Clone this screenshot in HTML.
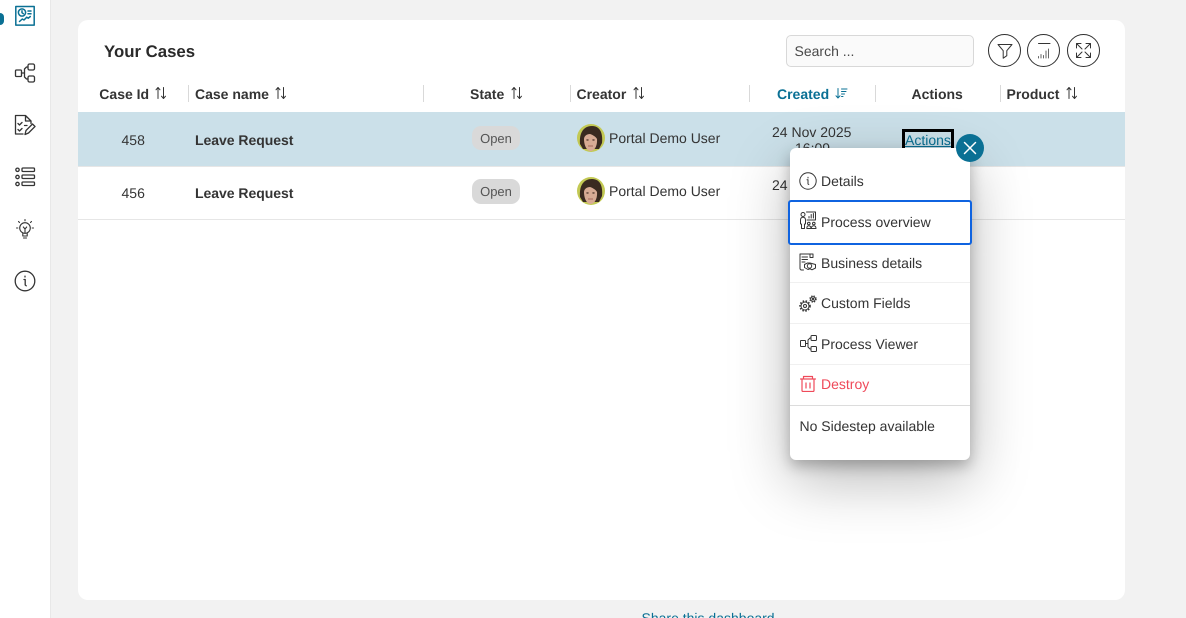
<!DOCTYPE html>
<html><head><meta charset="utf-8"><style>
*{box-sizing:border-box}
html,body{margin:0;padding:0;width:1186px;height:618px;overflow:hidden;background:#f2f2f2}
#root{position:relative;width:1186px;height:618px;overflow:hidden;background:#f2f2f2;font-family:"Liberation Sans",sans-serif;color:#343434;font-size:14px;text-rendering:geometricPrecision}
.a{position:absolute;white-space:nowrap}
#side{position:absolute;left:0;top:0;width:51px;height:618px;background:#fff;border-right:1px solid #e8e8e8}
#card{position:absolute;left:78px;top:20px;width:1047px;height:580px;background:#fff;border-radius:10px;overflow:hidden}
.th{position:absolute;top:86px;font-weight:700;font-size:14px;line-height:16px;color:#343434;white-space:nowrap}
.sep{position:absolute;top:85px;width:1px;height:17px;background:#d9d9d9}
.sort{position:absolute;top:86px}
.badge{position:absolute;width:48px;height:25px;background:#d9d9d9;border-radius:9px;color:#555;font-size:13px;line-height:25px;text-align:center}
.av{position:absolute;left:577px;width:28px;height:28px}
.ic{position:absolute;fill:none;stroke:#343434;stroke-width:1;stroke-linecap:round;stroke-linejoin:round}
.mi{position:absolute;left:821px;font-size:14px;line-height:16px;white-space:nowrap;color:#343434}
.ln{position:absolute;left:790px;width:180px;height:1px;background:#f0f0f0}
.cb{position:absolute;top:34px;width:33px;height:33px;border:1px solid #2f2f2f;border-radius:50%}
</style></head><body><div id="root">
<div id="side"></div>
<div class="a" style="left:0;top:13px;width:4px;height:12px;background:#0a7094;border-radius:0 4px 4px 0"></div>
<svg class="ic" style="left:15px;top:5px;stroke:#0a7094;stroke-width:1.500" width="20" height="21" viewBox="0 0 20 21"><rect x=".8" y="1.500" width="18.400" height="18.600"/><circle cx="7" cy="7.500" r="3.600"/><path d="M7 5.700v2l1.300 1M13 6h3M13 8.700h3M4.500 16.500l2.800-2.500 1.700 1 2.800-2.800 1.500 1 2-1.700"/></svg>
<svg class="ic" style="left:14px;top:62px;stroke-width:1.300" width="22" height="22" viewBox="0 0 22 22"><rect x="1.500" y="8" width="6" height="6.500" rx="1"/><rect x="14" y="2" width="6.500" height="6" rx="1.500"/><rect x="14" y="14" width="6.500" height="6" rx="1.500"/><path d="M7.500 11h3M14 5h-1.500l-2 2v8l2 2H14"/></svg>
<svg class="ic" style="left:14px;top:114px;stroke-width:1.300" width="22" height="22" viewBox="0 0 22 22"><path d="M9 20H1.500V1.500h10l5.500 5.500v2.500M11.500 1.500V7H17M4 9.500l1.500 1.500L8 8.500M4 15.500L5.500 17 8 14.500M10.500 11.500h2.500"/><path d="M11 20.500l1-4 6.500-6.500 2.500 2.500-6.500 6.500z"/></svg>
<svg class="ic" style="left:14px;top:166px;stroke-width:1.300" width="22" height="22" viewBox="0 0 22 22"><circle cx="3.500" cy="3.800" r="1.700"/><circle cx="3.500" cy="11" r="1.700"/><circle cx="3.500" cy="18" r="1.700"/><rect x="8" y="2" width="12.500" height="3.500" rx="1"/><rect x="8" y="9" width="12.500" height="3.500" rx="1"/><rect x="8" y="16" width="12.500" height="3.500" rx="1"/></svg>
<svg class="ic" style="left:14px;top:218px;stroke-width:1.100" width="22" height="22" viewBox="0 0 22 22"><circle cx="11" cy="10" r="5.300"/><path d="M8.800 15.200v2.800h4.400v-2.800M9.500 20h3M11 14.500V11L9.300 9M11 11l1.700-2M11 1.500v1.300M4.500 3.500l1 1M17.500 3.500l-1 1M2.500 10h1.300M18.200 10h1.300"/></svg>
<svg class="ic" style="left:14px;top:270px;stroke-width:1.300" width="22" height="22" viewBox="0 0 22 22"><circle cx="11" cy="11" r="9.800"/><path d="M10 9.500h1.200v5.500l1 .8M11 6.200v.8"/></svg>

<div id="card"></div>
<div class="a" style="left:104px;top:41px;font-size:16.800px;font-weight:700;line-height:21px;color:#2a2a2a">Your Cases</div>
<div class="a" style="left:786px;top:35px;width:188px;height:32px;background:#fafafa;border:1px solid #d8d8d8;border-radius:5px;padding-left:7.500px;line-height:31px;font-size:14px;color:#4a4a4a">Search ...</div>
<div class="cb" style="left:988px"></div><div class="cb" style="left:1027px"></div><div class="cb" style="left:1067px"></div>
<svg class="ic" style="left:996px;top:42px" width="18" height="18" viewBox="0 0 18 18"><path d="M2 2.500h14l-5.200 6.200v5l-3.600 2.500V8.700z"/></svg>
<svg class="ic" style="left:1036px;top:42px;stroke:#666" width="16" height="18" viewBox="0 0 16 18"><path stroke="#343434" d="M2.500 1.500h11.500"/><path d="M2.500 16v-1.500M5 16v-3.500M7.500 16v-2.500M10 16V9M12.500 16V7"/></svg>
<svg class="ic" style="left:1075px;top:42px" width="17" height="17" viewBox="0 0 17 17"><path d="M1.500 6V1.500H6M1.500 1.500L7 7M15.500 6V1.500H11M15.500 1.500L10 7M1.500 11v4.500H6M1.500 15.500L7 10M15.500 11v4.500H11M15.500 15.500L10 10"/></svg>

<div class="th" style="left:99.300px">Case Id</div>
<div class="th" style="left:195px">Case name</div>
<div class="th" style="left:470px">State</div>
<div class="th" style="left:576.500px">Creator</div>
<div class="th" style="left:777px;color:#0a7094">Created</div>
<div class="th" style="left:911.500px">Actions</div>
<div class="th" style="left:1006.500px">Product</div>
<div class="sep" style="left:188px"></div><div class="sep" style="left:423px"></div><div class="sep" style="left:570px"></div><div class="sep" style="left:749px"></div><div class="sep" style="left:875px"></div><div class="sep" style="left:1000px"></div>
<svg class="ic sort" style="left:155px" width="12" height="14" viewBox="0 0 12 14"><path d="M3 12.500V1.500L1 3.800M3 1.500l2 2.300M8.500 1.500v11l-2-2.300M8.500 12.500l2-2.300"/></svg>
<svg class="ic sort" style="left:275px" width="12" height="14" viewBox="0 0 12 14"><path d="M3 12.500V1.500L1 3.800M3 1.500l2 2.300M8.500 1.500v11l-2-2.300M8.500 12.500l2-2.300"/></svg>
<svg class="ic sort" style="left:511px" width="12" height="14" viewBox="0 0 12 14"><path d="M3 12.500V1.500L1 3.800M3 1.500l2 2.300M8.500 1.500v11l-2-2.300M8.500 12.500l2-2.300"/></svg>
<svg class="ic sort" style="left:632.500px" width="12" height="14" viewBox="0 0 12 14"><path d="M3 12.500V1.500L1 3.800M3 1.500l2 2.300M8.500 1.500v11l-2-2.300M8.500 12.500l2-2.300"/></svg>
<svg class="ic sort" style="left:1066px" width="12" height="14" viewBox="0 0 12 14"><path d="M3 12.500V1.500L1 3.800M3 1.500l2 2.300M8.500 1.500v11l-2-2.300M8.500 12.500l2-2.300"/></svg>
<svg class="ic sort" style="left:835px;stroke:#0a7094" width="13" height="14" viewBox="0 0 13 14"><path d="M3 2.500v9.500L1 9.800M3 12l2-2.200M6.500 3h5.500M6.500 5.500h4.500M6.500 8h3M6.500 10.500h1.500"/></svg>

<div class="a" style="left:78px;top:112px;width:1047px;height:55px;background:#cbe0e9;border-bottom:1px solid #e6e6e6"></div>
<div class="a" style="left:78px;top:219px;width:1047px;height:1px;background:#e6e6e6"></div>

<div class="a" style="left:121.500px;top:132px;line-height:16px">458</div>
<div class="a" style="left:121.500px;top:185px;line-height:16px">456</div>
<div class="a" style="left:195px;top:132px;line-height:16px;font-weight:700;letter-spacing:-.03px">Leave Request</div>
<div class="a" style="left:195px;top:185px;line-height:16px;font-weight:700;letter-spacing:-.03px">Leave Request</div>
<div class="badge" style="left:472px;top:126px;height:24px;line-height:25px">Open</div>
<div class="badge" style="left:472px;top:179px">Open</div>
<svg class="av" style="top:124px" viewBox="0 0 28 28"><defs><clipPath id="c1"><circle cx="14" cy="14" r="14"/></clipPath></defs><g clip-path="url(#c1)"><rect width="28" height="28" fill="#c3c954"/><path d="M3 20C2 8 7 2 15 2s11 7 10 17l-3 6H6z" fill="#3a2a20"/><path d="M7 15c0-3 3-5 6-5 3 1 6 3 7 5 .5 6-2 12-6.500 12C9.500 27 7 21 7 15z" fill="#d8ab94"/><ellipse cx="10.500" cy="16" rx="1.300" ry=".7" fill="#5a4034"/><ellipse cx="16.500" cy="16" rx="1.300" ry=".7" fill="#5a4034"/><path d="M11 22h5" stroke="#a66a5c" stroke-width="1"/></g></svg>
<svg class="av" style="top:177px" viewBox="0 0 28 28"><defs><clipPath id="c2"><circle cx="14" cy="14" r="14"/></clipPath></defs><g clip-path="url(#c2)"><rect width="28" height="28" fill="#c3c954"/><path d="M3 20C2 8 7 2 15 2s11 7 10 17l-3 6H6z" fill="#3a2a20"/><path d="M7 15c0-3 3-5 6-5 3 1 6 3 7 5 .5 6-2 12-6.500 12C9.500 27 7 21 7 15z" fill="#d8ab94"/><ellipse cx="10.500" cy="16" rx="1.300" ry=".7" fill="#5a4034"/><ellipse cx="16.500" cy="16" rx="1.300" ry=".7" fill="#5a4034"/><path d="M11 22h5" stroke="#a66a5c" stroke-width="1"/></g></svg>
<div class="a" style="left:609px;top:130px;line-height:16px">Portal Demo User</div>
<div class="a" style="left:609px;top:183px;line-height:16px">Portal Demo User</div>
<div class="a" style="left:772px;top:124px;line-height:16px">24 Nov 2025</div>
<div class="a" style="left:795px;top:140px;line-height:16px">16:09</div>
<div class="a" style="left:772px;top:177px;line-height:16px">24 Nov 2025</div>
<div class="a" style="left:902px;top:129px;width:52px;height:22px;border:3px solid #000;border-bottom:0"></div>
<div class="a" style="left:905px;top:132px;line-height:16px;color:#0a7094;text-decoration:underline">Actions</div>

<div class="a" style="left:790px;top:148px;width:180px;height:312px;background:#fff;border-radius:6px;box-shadow:0 6px 14px rgba(0,0,0,.25),0 20px 60px rgba(0,0,0,.28)"></div>
<div class="a" style="left:956px;top:134px;width:28px;height:28px;background:#0a7094;border-radius:50%"></div>
<svg class="ic" style="left:963px;top:141px;stroke:#fff;stroke-width:1.500" width="14" height="14" viewBox="0 0 14 14"><path d="M1.500 1.500l11 11M12.500 1.500l-11 11"/></svg>

<div class="a" style="left:788px;top:200px;width:184px;height:45px;border:2.500px solid #0f63e0;border-radius:3px;background:#fff"></div>
<div class="ln" style="top:282px"></div><div class="ln" style="top:323px"></div><div class="ln" style="top:364px"></div>
<div class="ln" style="top:405px;background:#dcdcdc"></div>

<svg class="ic" style="left:799px;top:172px" width="18" height="18" viewBox="0 0 18 18"><circle cx="9" cy="9" r="8.200"/><path d="M8 7.700h1v4.300l.8.500M9 5.300v.7"/></svg>
<div class="mi" style="top:173px">Details</div>
<svg class="ic" style="left:799px;top:211px" width="18" height="19" viewBox="0 0 18 19"><circle cx="4" cy="3.500" r="2"/><path d="M1.500 13V9c0-1.800 1-2.800 2.500-2.800S6.500 7.200 6.500 9v4M2.500 13v4.500h3V13M7.500 1h9v8H8M10 7V5.500M12.200 7V3.500M14.400 7V2.500"/><circle cx="9.800" cy="12.500" r="1.300"/><circle cx="14.800" cy="12.500" r="1.300"/><path d="M7.800 17.500c0-2 .8-2.800 2-2.800s2 .8 2.300 2.800c.3-2 1.300-2.800 2.700-2.800s2.200.8 2.200 2.800z"/></svg>
<div class="mi" style="top:214px">Process overview</div>
<svg class="ic" style="left:799px;top:253px" width="18" height="18" viewBox="0 0 18 18"><path d="M4.500 17H2.500C1.500 17 1 16 1 15.500V1h10v3.500h3V1h-3M3 4h5.500M3 6.500h5.500M3 9h3"/><path d="M5.500 11.500l3-1.500h2.500l5.500 1.500v3.500l-3.500 1.800-2-1-2 .7-3.500-2z"/><circle cx="10.500" cy="13" r="2.200"/></svg>
<div class="mi" style="top:255px">Business details</div>
<svg class="ic" style="left:799px;top:294px" width="18" height="18" viewBox="0 0 18 18"><circle cx="6" cy="12" r="4"/><circle cx="6" cy="12" r="5" stroke-width="1.600" stroke-dasharray="1.500 1.500" stroke-linecap="butt"/><circle cx="6" cy="12" r="1.500"/><circle cx="14" cy="5" r="2.300"/><circle cx="14" cy="5" r="3" stroke-width="1.400" stroke-dasharray="1.200 1.200" stroke-linecap="butt"/><circle cx="14" cy="5" r=".7"/></svg>
<div class="mi" style="top:295px">Custom Fields</div>
<svg class="ic" style="left:800px;top:335px" width="17" height="18" viewBox="0 0 17 18"><rect x=".5" y="5.500" width="5" height="6" rx=".5"/><rect x="11" y=".5" width="5.500" height="5" rx="1"/><rect x="11" y="11.500" width="5.500" height="5" rx="1"/><path d="M5.500 8.500h2M11 3h-1L8 5v7l2 2h1"/></svg>
<div class="mi" style="top:336px">Process Viewer</div>
<svg class="ic" style="left:800px;top:375px;stroke:#ef4a5a;stroke-width:1.200" width="16" height="17" viewBox="0 0 16 17"><path d="M.5 4h15M2 4v11.500c0 .5.500 1 1 1h10c.5 0 1-.5 1-1V4M3.500 4V1.500h9V4M6 8v5M10 8v5"/></svg>
<div class="mi" style="top:376px;color:#ef4a5a">Destroy</div>
<div class="a" style="left:799.500px;top:418px;line-height:16px">No Sidestep available</div>

<div class="a" style="left:641.500px;top:610px;line-height:16px;color:#0a7094">Share this dashboard</div>
</div></body></html>
